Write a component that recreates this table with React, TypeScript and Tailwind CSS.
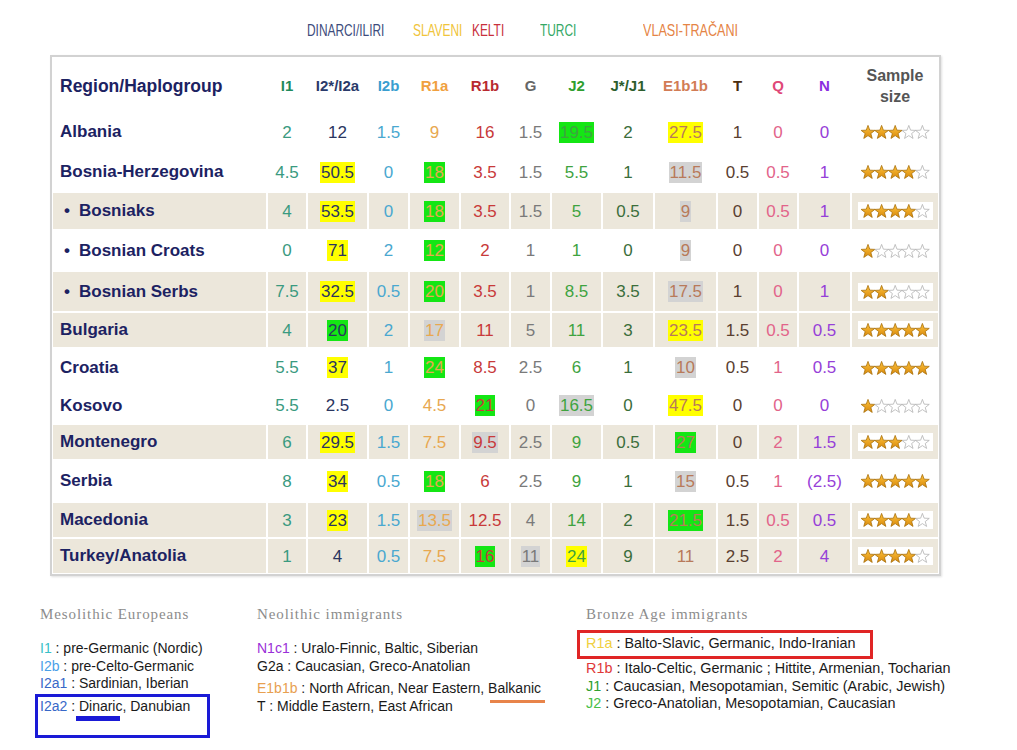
import React from "react";

// haplogroup columns: header colour, value colour
const cols = [
  { key: "I1", head: "text-[#1f8a5c]", cell: "text-[#3a9a80]" },
  { key: "I2*/I2a", head: "text-[#2a3a6a]", cell: "text-[#2a3560]" },
  { key: "I2b", head: "text-[#3a9ed0]", cell: "text-[#4aa8d0]" },
  { key: "R1a", head: "text-[#f0a040]", cell: "text-[#e8a850]" },
  { key: "R1b", head: "text-[#b82a30]", cell: "text-[#c83a3a]" },
  { key: "G", head: "text-[#666666]", cell: "text-[#7a7a7a]" },
  { key: "J2", head: "text-[#2f9f2f]", cell: "text-[#3fa33f]" },
  { key: "J*/J1", head: "text-[#2d5e2d]", cell: "text-[#3b6e3b]" },
  { key: "E1b1b", head: "text-[#d27c55]", cell: "text-[#b87a5a]" },
  { key: "T", head: "text-[#4a2e10]", cell: "text-[#5a4030]" },
  { key: "Q", head: "text-[#e04878]", cell: "text-[#e2648a]" },
  { key: "N", head: "text-[#8a2ee0]", cell: "text-[#9640d8]" },
];

// value suffix: y = yellow, g = green, s = grey highlight
const rows = [
  { name: "Albania", beige: false, stars: 3, v: ["2", "12", "1.5", "9", "16", "1.5", "19.5g", "2", "27.5y", "1", "0", "0"] },
  { name: "Bosnia-Herzegovina", beige: false, stars: 4, v: ["4.5", "50.5y", "0", "18g", "3.5", "1.5", "5.5", "1", "11.5s", "0.5", "0.5", "1"] },
  { name: "Bosniaks", bullet: true, beige: true, stars: 4, v: ["4", "53.5y", "0", "18g", "3.5", "1.5", "5", "0.5", "9s", "0", "0.5", "1"] },
  { name: "Bosnian Croats", bullet: true, beige: false, stars: 1, v: ["0", "71y", "2", "12g", "2", "1", "1", "0", "9s", "0", "0", "0"] },
  { name: "Bosnian Serbs", bullet: true, beige: true, stars: 2, v: ["7.5", "32.5y", "0.5", "20g", "3.5", "1", "8.5", "3.5", "17.5s", "1", "0", "1"] },
  { name: "Bulgaria", beige: true, stars: 5, v: ["4", "20g", "2", "17s", "11", "5", "11", "3", "23.5y", "1.5", "0.5", "0.5"] },
  { name: "Croatia", beige: false, stars: 5, v: ["5.5", "37y", "1", "24g", "8.5", "2.5", "6", "1", "10s", "0.5", "1", "0.5"] },
  { name: "Kosovo", beige: false, stars: 1, v: ["5.5", "2.5", "0", "4.5", "21g", "0", "16.5s", "0", "47.5y", "0", "0", "0"] },
  { name: "Montenegro", beige: true, stars: 3, v: ["6", "29.5y", "1.5", "7.5", "9.5s", "2.5", "9", "0.5", "27g", "0", "2", "1.5"] },
  { name: "Serbia", beige: false, stars: 5, v: ["8", "34y", "0.5", "18g", "6", "2.5", "9", "1", "15s", "0.5", "1", "(2.5)"] },
  { name: "Macedonia", beige: true, stars: 4, v: ["3", "23y", "1.5", "13.5s", "12.5", "4", "14", "2", "21.5g", "1.5", "0.5", "0.5"] },
  { name: "Turkey/Anatolia", beige: true, stars: 4, v: ["1", "4", "0.5", "7.5", "16g", "11s", "24y", "9", "11", "2.5", "2", "4"] },
];

const hl: Record<string, string> = {
  y: "bg-[#ffff00]",
  g: "bg-[#14e614]",
  s: "bg-[#d3d3d3]",
};

const STAR =
  "7,0.4 8.76,5.17 13.85,5.38 9.85,8.53 11.23,13.42 7,10.6 2.77,13.42 4.15,8.53 0.15,5.38 5.24,5.17";

const Stars = ({ n }: { n: number }) => (
  <svg width="69" height="14" viewBox="0 0 69 14">
    <defs>
      <linearGradient id="starFill" x1="0" y1="0" x2="0" y2="1">
        <stop offset="0" stopColor="#ffc43c" />
        <stop offset="1" stopColor="#d8890c" />
      </linearGradient>
    </defs>
    {[0, 1, 2, 3, 4].map((i) => (
      <polygon
        key={i}
        points={STAR}
        transform={`translate(${i * 13.6},0)`}
        fill={i < n ? "url(#starFill)" : "#ffffff"}
        stroke={i < n ? "#a86f08" : "#b3b3b3"}
        strokeWidth="0.8"
        strokeLinejoin="round"
      />
    ))}
  </svg>
);

const Value = ({ raw, color }: { raw: string; color: string }) => {
  const last = raw.slice(-1);
  const mark = hl[last] ? last : "";
  const text = mark ? raw.slice(0, -1) : raw;
  return (
    <span className={`inline-block px-[1px] leading-[21px] ${color} ${mark ? hl[mark] : ""}`}>
      {text}
    </span>
  );
};

const App = () => {
  const beigeBg = "bg-[#ece7db]";

  return (
    <div className="w-[1017px] h-[750px] overflow-hidden bg-white font-['Liberation_Sans',Arial,sans-serif]">
      {/* Group labels */}
      <div className="h-[55px] flex items-center pt-[6px] pl-[307px] text-[17px] leading-none whitespace-nowrap">
        <div className="w-[106px]">
          <span className="inline-block origin-left scale-x-[0.7] text-[#3d4c7c]">DINARCI/ILIRI</span>
        </div>
        <div className="w-[59px]">
          <span className="inline-block origin-left scale-x-[0.7] text-[#f0c43a]">SLAVENI</span>
        </div>
        <div className="w-[68px]">
          <span className="inline-block origin-left scale-x-[0.7] text-[#c8303c]">KELTI</span>
        </div>
        <div className="w-[103px]">
          <span className="inline-block origin-left scale-x-[0.7] text-[#34a866]">TURCI</span>
        </div>
        <div>
          <span className="inline-block origin-left scale-x-[0.74] text-[#e58445]">VLASI-TRAČANI</span>
        </div>
      </div>

      {/* Table */}
      <div className="ml-[50px] w-[891px] border-2 border-[#d2d2d2] p-[1px] shadow-[1px_1px_2px_rgba(0,0,0,0.12)]">
        <div className="grid grid-cols-[213px_38px_59px_39px_49px_48px_39px_49px_50px_61px_39px_38px_51px_86px] grid-rows-[53px_38px_38px_36px_39px_39px_34px_37px_35px_34px_40px_34px_34px] gap-[2px] text-[17px]">
          <div className="flex items-center pl-[7px] pt-[4px] text-[17.5px] font-bold text-[#1c2262]">
            Region/Haplogroup
          </div>
          {cols.map((c) => (
            <div
              key={c.key}
              className={`flex items-center justify-center pt-[4px] text-[15px] font-bold ${c.head}`}
            >
              {c.key}
            </div>
          ))}
          <div className="flex flex-col items-center justify-center pt-[3px] text-[16px] font-bold leading-[21px] text-[#555555]">
            <span>Sample</span>
            <span>size</span>
          </div>

          {rows.map((r) => (
            <React.Fragment key={r.name}>
              <div
                className={`flex items-center pl-[7px] font-bold text-[#1c2262] ${r.beige ? beigeBg : ""}`}
              >
                {r.bullet && <span className="w-[19px] pl-[4px]">•</span>}
                {r.name}
              </div>
              {r.v.map((raw, i) => (
                <div
                  key={i}
                  className={`flex items-center justify-center ${r.beige ? beigeBg : ""}`}
                >
                  <Value raw={raw} color={cols[i].cell} />
                </div>
              ))}
              <div className={`flex items-center justify-center ${r.beige ? beigeBg : ""}`}>
                <span className="flex bg-white px-[3px] py-[2px]">
                  <Stars n={r.stars} />
                </span>
              </div>
            </React.Fragment>
          ))}
        </div>
      </div>

      {/* Legend */}
      <div className="mt-[28px] flex pl-[40px] text-[14px] leading-[17.5px] text-[#1a1a1a] whitespace-nowrap">
        <div className="w-[217px]">
          <div className="h-[20px] leading-[20px] font-['Liberation_Serif',serif] text-[15px] tracking-[0.9px] text-[#8c8c8c]">
            Mesolithic Europeans
          </div>
          <div className="mt-[16px]">
            <span className="text-[#38c0c8]">I1</span> : pre-Germanic (Nordic)
          </div>
          <div>
            <span className="text-[#4aa0e8]">I2b</span> : pre-Celto-Germanic
          </div>
          <div>
            <span className="text-[#3868c8]">I2a1</span> : Sardinian, Iberian
          </div>
          <div className="ml-[-5px] mt-[1px] h-[44px] w-[175px] border-[3px] border-[#1a1ad6] pl-[2px] pt-[1px]">
            <div>
              <span className="text-[#3868c8]">I2a2</span> : Dinaric, Danubian
            </div>
            <div className="ml-[36px] mt-[1px] h-[5px] w-[44px] bg-[#1a1ad6]" />
          </div>
        </div>

        <div className="w-[329px]">
          <div className="h-[20px] leading-[20px] font-['Liberation_Serif',serif] text-[15px] tracking-[0.9px] text-[#8c8c8c]">
            Neolithic immigrants
          </div>
          <div className="mt-[16px]">
            <span className="text-[#9a30d8]">N1c1</span> : Uralo-Finnic, Baltic, Siberian
          </div>
          <div>G2a : Caucasian, Greco-Anatolian</div>
          <div className="relative mt-[5px]">
            <span className="text-[#e8a050]">E1b1b</span> : North African, Near Eastern, Balkanic
            <div className="absolute left-[233px] top-[20px] h-[3px] w-[55px] bg-[#e8844a]" />
          </div>
          <div>T : Middle Eastern, East African</div>
        </div>

        <div className="text-[14.4px]">
          <div className="h-[20px] leading-[20px] font-['Liberation_Serif',serif] text-[15px] tracking-[0.9px] text-[#8c8c8c]">
            Bronze Age immigrants
          </div>
          <div className="ml-[-9px] mt-[6px] h-[29px] w-[296px] border-[3px] border-[#e02525] pl-[6px] pt-[2px]">
            <span className="text-[#f0d040]">R1a</span> : Balto-Slavic, Germanic, Indo-Iranian
          </div>
          <div className="mt-[1px]">
            <span className="text-[#e03838]">R1b</span> : Italo-Celtic, Germanic ; Hittite, Armenian, Tocharian
          </div>
          <div>
            <span className="text-[#30a030]">J1</span> : Caucasian, Mesopotamian, Semitic (Arabic, Jewish)
          </div>
          <div>
            <span className="text-[#48c048]">J2</span> : Greco-Anatolian, Mesopotamian, Caucasian
          </div>
        </div>
      </div>
    </div>
  );
};

export default App;
